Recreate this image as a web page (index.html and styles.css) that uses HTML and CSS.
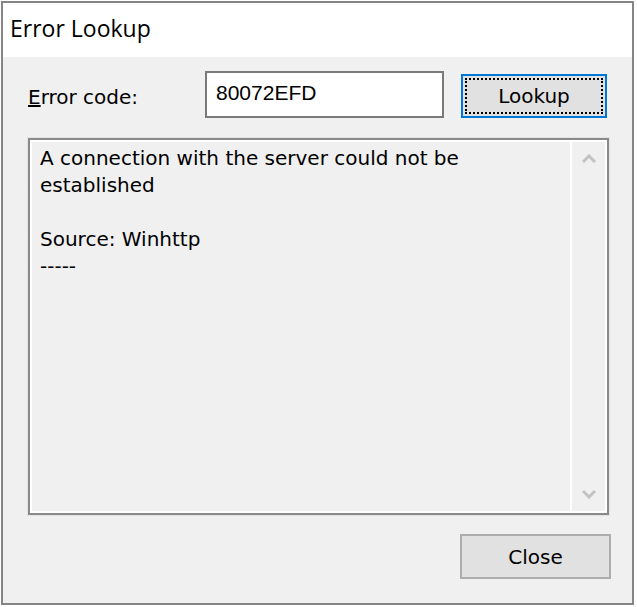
FILE: index.html
```html
<!DOCTYPE html>
<html lang="en">
<head>
    <meta charset="UTF-8">
    <title>Error Lookup</title>
    <link rel="stylesheet" href="styles.css">
</head>
<body>
    <div class="window">
        <div class="titlebar">Error Lookup</div>

        <div class="dialog">
            <!-- Eingabezeile -->
            <div class="code-row">
                <label class="code-label" for="code"><u>E</u>rror code:</label>
                <input class="code-input" id="code" type="text" value="80072EFD">
                <button class="btn btn-default">
                    <span class="focus">Lookup</span>
                </button>
            </div>

            <!-- Ergebnis -->
            <div class="result">
                <div class="result-text">
                    <p>A connection with the server could not be established</p>
                    <p>&nbsp;</p>
                    <p>Source: Winhttp</p>
                    <p>-----</p>
                </div>
                <div class="scrollbar">
                    <svg width="14" height="10" viewBox="0 0 14 10">
                        <path d="M1 8 L7 2 L13 8" fill="none" stroke="#c2c2c2" stroke-width="3"/>
                    </svg>
                    <svg width="14" height="10" viewBox="0 0 14 10">
                        <path d="M1 2 L7 8 L13 2" fill="none" stroke="#c2c2c2" stroke-width="3"/>
                    </svg>
                </div>
            </div>

            <div class="footer">
                <button class="btn">Close</button>
            </div>
        </div>
    </div>
</body>
</html>
```

FILE: styles.css
```css
* {
    margin: 0;
    padding: 0;
    box-sizing: border-box;
}

body {
    background-color: #ffffff;
    font-family: "DejaVu Sans", Tahoma, sans-serif;
    color: #000;
}

.window {
    width: 633px;
    height: 604px;
    margin: 1px 0 0 1px;
    border: 2px solid #858585;
    display: flex;
    flex-direction: column;
}

.titlebar {
    height: 54px;
    background-color: #fff;
    padding: 0 0 5px 7px;
    display: flex;
    align-items: center;
    font-family: "Open Sans", "Noto Sans", sans-serif;
    font-size: 23px;
    color: #000;
}

.dialog {
    flex: 1;
    background-color: #f0f0f0;
    padding: 14px 0 0 25px;
    display: flex;
    flex-direction: column;
}

.code-row {
    display: flex;
    align-items: center;
    height: 47px;
}

.code-label {
    width: 177px;
    font-size: 20px;
    padding-top: 5px;
}

.code-input {
    width: 239px;
    height: 47px;
    border: 2px solid #7a7a7a;
    background: #fff;
    padding: 0 0 3px 9px;
    font-family: "Liberation Sans", Arial, sans-serif;
    font-size: 21px;
    outline: none;
}

.btn {
    width: 151px;
    height: 45px;
    background-color: #e1e1e1;
    border: 2px solid #adadad;
    font-family: "DejaVu Sans", Tahoma, sans-serif;
    font-size: 20px;
    color: #000;
}

.btn-default {
    width: 146px;
    height: 44px;
    margin-left: 17px;
    margin-top: 2px;
    border-color: #0078d7;
    padding: 2px;
}

.focus {
    display: flex;
    height: 100%;
    align-items: center;
    justify-content: center;
    border: 2px dotted #000;
}

.result {
    margin-top: 20px;
    width: 581px;
    height: 377px;
    border: 2px solid #8a8a8a;
    box-shadow: inset 0 0 0 2px #fff, 0 0 0 1px #e3e3e3;
    display: flex;
    padding: 2px;
}

.result-text {
    flex: 1;
    padding: 3px 0 0 8px;
    font-size: 20px;
    line-height: 27px;
    border-right: 2px solid #fff;
}

.scrollbar {
    width: 33px;
    display: flex;
    flex-direction: column;
    justify-content: space-between;
    align-items: center;
    padding: 12px 0 12px;
}

.footer {
    display: flex;
    justify-content: flex-end;
    padding: 19px 21px 0 0;
}
```
